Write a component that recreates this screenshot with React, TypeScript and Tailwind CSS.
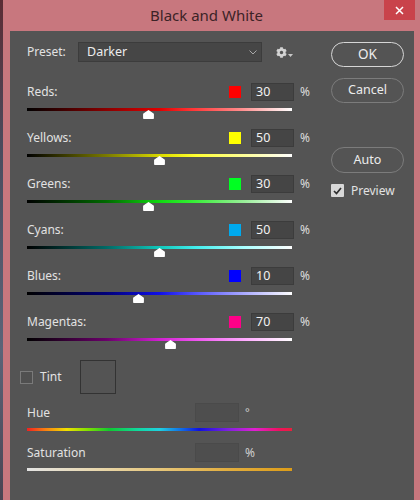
import React from "react";
import { FaCog } from "react-icons/fa";

type Row = { name: string; value: number; swatch: string; track: string };

const rows: Row[] = [
  {
    name: "Reds:",
    value: 30,
    swatch: "bg-[#ff0000]",
    track: "bg-[linear-gradient(to_right,#000_0%,#8a0000_30%,#e00000_50%,#f33_62%,#f88_80%,#fff_100%)]",
  },
  {
    name: "Yellows:",
    value: 50,
    swatch: "bg-[#ffff00]",
    track: "bg-[linear-gradient(to_right,#000_0%,#7a7a00_30%,#e0e000_52%,#ff3_64%,#ff9_82%,#fff_100%)]",
  },
  {
    name: "Greens:",
    value: 30,
    swatch: "bg-[#00ff22]",
    track: "bg-[linear-gradient(to_right,#000_0%,#006a00_30%,#11d811_50%,#3e3_62%,#9e9_82%,#fff_100%)]",
  },
  {
    name: "Cyans:",
    value: 50,
    swatch: "bg-[#00aaee]",
    track: "bg-[linear-gradient(to_right,#000_0%,#006a66_30%,#11c8bb_50%,#4ee_64%,#aff_82%,#fff_100%)]",
  },
  {
    name: "Blues:",
    value: 10,
    swatch: "bg-[#0000ff]",
    track: "bg-[linear-gradient(to_right,#000_0%,#00007a_30%,#1010e8_50%,#55f_64%,#aaf_82%,#fff_100%)]",
  },
  {
    name: "Magentas:",
    value: 70,
    swatch: "bg-[#ff0088]",
    track: "bg-[linear-gradient(to_right,#000_0%,#6a006a_30%,#d020d0_50%,#e5e_64%,#faf_82%,#fff_100%)]",
  },
];

function Thumb({ value }: { value: number }) {
  const pct = ((value + 200) / 500) * 100;
  return (
    <svg
      width="11"
      height="9"
      viewBox="0 0 11 9"
      className="absolute top-[2px]"
      style={{ left: `calc(${pct}% - 5.5px)` }}
    >
      <polygon
        points="5.5,0.8 10.2,4 10.2,8.2 0.8,8.2 0.8,4"
        fill="#fff"
        stroke="#fff"
        strokeWidth="1.4"
        strokeLinejoin="round"
      />
    </svg>
  );
}

function SliderRow({ row }: { row: Row }) {
  return (
    <div className="flex flex-col pb-[18px]">
      <div className="flex h-[18px] items-center">
        <span className="flex-1 text-[12px] text-[#e2e2e2]">{row.name}</span>
        <span className={`h-[12px] w-[12px] ${row.swatch}`} />
        <div className="ml-[10px] flex h-[18px] w-[43px] items-center border border-[#3c3c3c] bg-[#454545] pl-[4px] text-[12.5px] text-[#f2f2f2]">
          {row.value}
        </div>
        <span className="ml-[6px] w-[11px] text-[12px] text-[#dcdcdc]">%</span>
      </div>
      <div className={`relative mt-[7px] h-[3px] w-[265px] ${row.track}`}>
        <Thumb value={row.value} />
      </div>
    </div>
  );
}

function PillButton({ label, primary, tall }: { label: string; primary?: boolean; tall?: boolean }) {
  return (
    <div
      className={`flex w-[73px] items-center justify-center rounded-full text-[#ececec] ${
        tall ? "h-[26px]" : "h-[25px]"
      } ${primary ? "border-[1.5px] border-[#d6d6d6] text-[13.5px]" : "border border-[#7c7c7c] text-[12.5px]"}`}
    >
      {label}
    </div>
  );
}

export default function App() {
  return (
    <div className="flex h-[500px] w-[420px] overflow-hidden font-['Noto_Sans',sans-serif]">
      {/* desktop peeking behind */}
      <div className="w-[3px] bg-[linear-gradient(to_bottom,#5a2c34,#4a4c5e_30%,#5b6478_70%,#4a4452)]" />

      {/* window frame */}
      <div className="relative flex flex-1 flex-col bg-[#c8777e] pl-[7px] pr-[6px]">
        <div className="flex h-[31px] items-center justify-center pr-[6px]">
          <span className="-ml-[5px] text-[15px] text-[#3c2327]">Black and White</span>
        </div>
        <div className="absolute right-[5px] top-0 flex h-[20px] w-[31px] items-center justify-center bg-[#c9434b]">
          <svg width="9" height="9" viewBox="0 0 9 9">
            <path d="M1 1 L8 8 M8 1 L1 8" stroke="#fff" strokeWidth="1.5" />
          </svg>
        </div>

        {/* dialog body */}
        <div className="flex flex-1 bg-[#545454] pl-[17px] pt-[11px]">
          <div className="flex w-[284px] flex-col">
            {/* preset */}
            <div className="flex h-[20px] items-center">
              <span className="w-[51px] text-[12px] text-[#e2e2e2]">Preset:</span>
              <div className="flex h-[20px] w-[184px] items-center border border-[#3c3c3c] bg-[#464646] pl-[8px] pr-[4px]">
                <span className="flex-1 text-[12.5px] text-[#ececec]">Darker</span>
                <svg width="8" height="5" viewBox="0 0 8 5">
                  <polyline points="0.5,0.5 4,4 7.5,0.5" fill="none" stroke="#a8a8a8" strokeWidth="1" />
                </svg>
              </div>
              <div className="ml-[14px] flex items-center">
                <FaCog className="h-[11px] w-[11px] text-[#d4d4d4]" />
                <svg width="5" height="3" viewBox="0 0 5 3" className="ml-[1px] mt-[6px]">
                  <polygon points="0,0 5,0 2.5,3" fill="#c8c8c8" />
                </svg>
              </div>
            </div>

            <div className="mt-[21px] flex flex-col">
              {rows.map((row) => (
                <SliderRow key={row.name} row={row} />
              ))}
            </div>

            {/* tint */}
            <div className="mt-[1px] flex h-[34px] items-center">
              <div className="-ml-[7px] flex w-[60px] items-center">
                <span className="h-[13px] w-[13px] border border-[#7a7a7a] bg-[#505050]" />
                <span className="ml-[7px] text-[12px] text-[#e2e2e2]">Tint</span>
              </div>
              <div className="h-[34px] w-[36px] border border-[#333]" />
            </div>

            {/* hue */}
            <div className="mt-[9px] flex h-[19px] items-center">
              <span className="w-[168px] text-[12px] text-[#e2e2e2]">Hue</span>
              <div className="h-[19px] w-[44px] border border-[#4a4a4a] bg-[#4e4e4e]" />
              <span className="ml-[6px] text-[11px] text-[#cfcfcf]">°</span>
            </div>
            <div className="mt-[6px] h-[3px] w-[265px] bg-[linear-gradient(to_right,#f02020_0%,#f88010_7%,#f0e000_15%,#80e000_23%,#10c830_31%,#10d8a0_42%,#20d0e0_50%,#1070e8_58%,#1010e0_65%,#8020e0_76%,#e020d0_86%,#f01060_95%,#e8203c_100%)]" />

            {/* saturation */}
            <div className="mt-[12px] flex h-[19px] items-center">
              <span className="w-[168px] text-[12px] text-[#e2e2e2]">Saturation</span>
              <div className="h-[19px] w-[44px] border border-[#4a4a4a] bg-[#4e4e4e]" />
              <span className="ml-[6px] text-[12px] text-[#cfcfcf]">%</span>
            </div>
            <div className="mt-[6px] h-[3px] w-[265px] bg-[linear-gradient(to_right,#e4e4e4_0%,#e8d8b0_25%,#e6c67a_50%,#e2ae40_75%,#dc9c18_100%)]" />
          </div>

          {/* buttons */}
          <div className="ml-[20px] flex w-[73px] flex-col">
            <PillButton label="OK" primary />
            <div className="mt-[11px]">
              <PillButton label="Cancel" />
            </div>
            <div className="mt-[44px]">
              <PillButton label="Auto" tall />
            </div>
            <div className="mt-[11px] flex h-[13px] items-center">
              <span className="flex h-[13px] w-[13px] items-center justify-center rounded-[1px] bg-[#d8d8d8]">
                <svg width="9" height="8" viewBox="0 0 9 8">
                  <polyline points="1,4 3.5,6.5 8,1" fill="none" stroke="#2e2e2e" strokeWidth="1.7" />
                </svg>
              </span>
              <span className="ml-[7px] text-[12px] text-[#e2e2e2]">Preview</span>
            </div>
          </div>
        </div>
      </div>
    </div>
  );
}
